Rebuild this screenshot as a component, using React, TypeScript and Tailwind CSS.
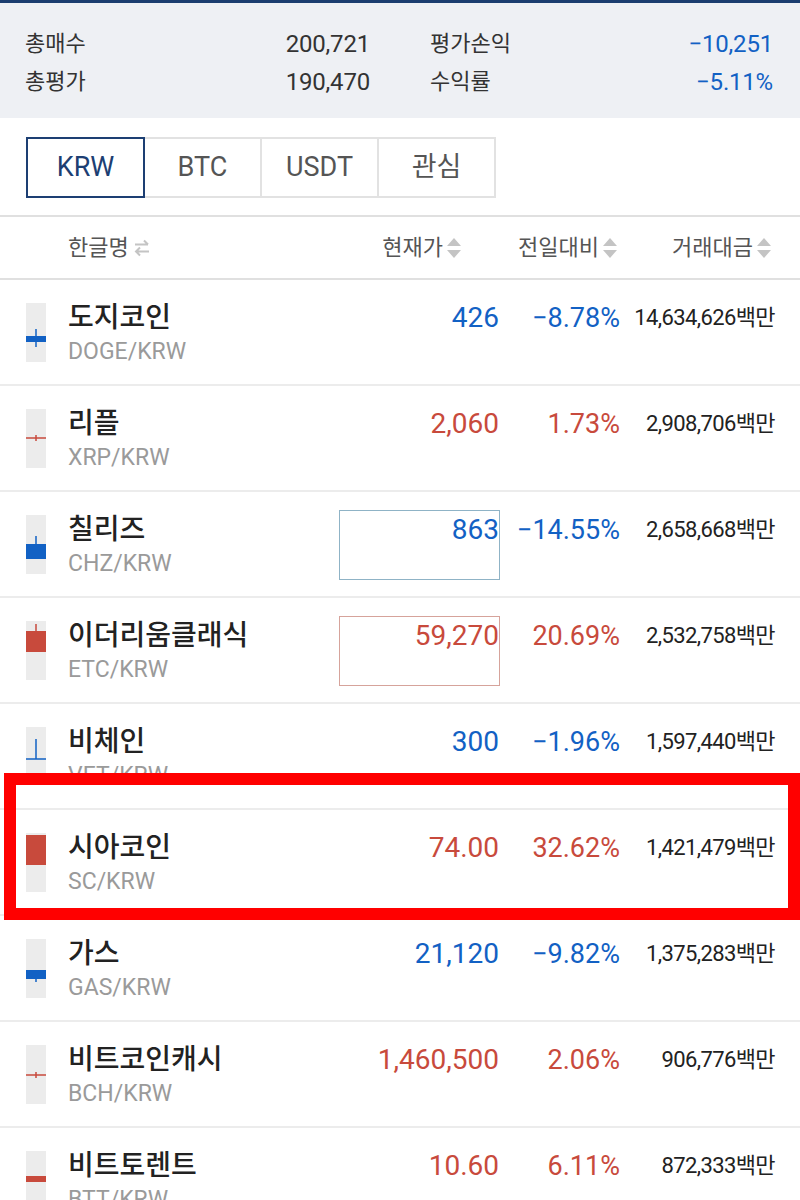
import React from 'react';

type Candle =
  | { kind: 'body'; top: number; bottom: number; wickTop?: number; wickBottom?: number }
  | { kind: 'line'; y: number; wickTop: number; wickBottom: number }
  | { kind: 'invT'; top: number; y: number };

interface Coin {
  name: string;
  symbol: string;
  price: string;
  change: string;
  volume: string;
  up: boolean;
  candle: Candle;
  box?: boolean;
}

const BLUE = '#1261c4';
const RED = '#c84a3c';

const coins: Coin[] = [
  { name: '도지코인', symbol: 'DOGE/KRW', price: '426', change: '−8.78%', volume: '14,634,626', up: false, candle: { kind: 'body', top: 33, bottom: 39, wickTop: 26, wickBottom: 44 } },
  { name: '리플', symbol: 'XRP/KRW', price: '2,060', change: '1.73%', volume: '2,908,706', up: true, candle: { kind: 'line', y: 29, wickTop: 26, wickBottom: 32 } },
  { name: '칠리즈', symbol: 'CHZ/KRW', price: '863', change: '−14.55%', volume: '2,658,668', up: false, box: true, candle: { kind: 'body', top: 29, bottom: 44, wickTop: 21 } },
  { name: '이더리움클래식', symbol: 'ETC/KRW', price: '59,270', change: '20.69%', volume: '2,532,758', up: true, box: true, candle: { kind: 'body', top: 10, bottom: 31, wickTop: 3 } },
  { name: '비체인', symbol: 'VET/KRW', price: '300', change: '−1.96%', volume: '1,597,440', up: false, candle: { kind: 'invT', top: 12, y: 32 } },
  { name: '시아코인', symbol: 'SC/KRW', price: '74.00', change: '32.62%', volume: '1,421,479', up: true, candle: { kind: 'body', top: 2, bottom: 32 } },
  { name: '가스', symbol: 'GAS/KRW', price: '21,120', change: '−9.82%', volume: '1,375,283', up: false, candle: { kind: 'body', top: 31, bottom: 40, wickBottom: 43 } },
  { name: '비트코인캐시', symbol: 'BCH/KRW', price: '1,460,500', change: '2.06%', volume: '906,776', up: true, candle: { kind: 'line', y: 30, wickTop: 27, wickBottom: 33 } },
  { name: '비트토렌트', symbol: 'BTT/KRW', price: '10.60', change: '6.11%', volume: '872,333', up: true, candle: { kind: 'body', top: 25, bottom: 31 } },
];

const CandleIcon: React.FC<{ candle: Candle; color: string }> = ({ candle, color }) => (
  <svg width="20" height="59" viewBox="0 0 20 59" className="shrink-0">
    <rect x="0" y="0" width="20" height="59" fill="#ececec" />
    {candle.kind === 'body' && (
      <>
        {candle.wickTop !== undefined && <rect x="9.25" y={candle.wickTop} width="1.5" height={candle.top - candle.wickTop} fill={color} />}
        {candle.wickBottom !== undefined && <rect x="9.25" y={candle.bottom} width="1.5" height={candle.wickBottom - candle.bottom} fill={color} />}
        <rect x="0" y={candle.top} width="20" height={candle.bottom - candle.top} fill={color} />
      </>
    )}
    {candle.kind === 'line' && (
      <>
        <rect x="9.25" y={candle.wickTop} width="1.5" height={candle.wickBottom - candle.wickTop} fill={color} />
        <rect x="0" y={candle.y - 0.75} width="20" height="1.5" fill={color} />
      </>
    )}
    {candle.kind === 'invT' && (
      <>
        <rect x="9.25" y={candle.top} width="1.5" height={candle.y - candle.top} fill={color} />
        <rect x="0" y={candle.y - 0.75} width="20" height="1.5" fill={color} />
      </>
    )}
  </svg>
);

const SortIcon = () => (
  <svg width="16" height="22" viewBox="0 0 16 22" className="ml-[3px] shrink-0">
    <path d="M8 1 L15 9 L1 9 Z" fill="#c4c4c4" />
    <path d="M8 21 L15 13 L1 13 Z" fill="#c4c4c4" />
  </svg>
);

const SwapIcon = () => (
  <svg width="18" height="20" viewBox="0 0 18 20" className="ml-[4px] shrink-0">
    <path d="M2 6.5 H15 M11 2.5 L15 6.5" stroke="#c4c4c4" strokeWidth="2" fill="none" />
    <path d="M16 13.5 H3 M7 9.5 L3 13.5 L7 17.5" stroke="#c4c4c4" strokeWidth="2" fill="none" />
  </svg>
);

const CoinRow: React.FC<{ coin: Coin }> = ({ coin }) => {
  const color = coin.up ? RED : BLUE;
  const boxBorder = coin.box ? (coin.up ? 'border-[#d6a39b]' : 'border-[#8fb3c6]') : 'border-transparent';
  return (
    <div className="flex h-[106px] items-start border-b-2 border-[#ececec] bg-white pt-[22px]">
      <div className="ml-[26px] mt-[1px]">
        <CandleIcon candle={coin.candle} color={color} />
      </div>
      <div className="ml-[22px] flex-1">
        <p className="text-[28px] leading-[32px] font-medium text-[#222]">{coin.name}</p>
        <p className="mt-[5px] text-[23px] leading-[26px] text-[#9a9a9a]">{coin.symbol}</p>
      </div>
      <div className={`-mt-[4px] h-[70px] w-[161px] border ${boxBorder} pt-[3px] text-right text-[28px] leading-[32px]`} style={{ color }}>
        {coin.price}
      </div>
      <div className="w-[120px] text-right text-[27px] leading-[32px]" style={{ color }}>
        {coin.change}
      </div>
      <div className="w-[155px] text-right text-[22px] leading-[32px] tracking-[-0.6px] text-[#222]">
        {coin.volume}백만
      </div>
      <div className="w-[25px]" />
    </div>
  );
};

export default function App() {
  const tabs = ['KRW', 'BTC', 'USDT', '관심'];

  return (
    <div className="relative min-h-[1200px] w-[800px] overflow-hidden bg-white" style={{ fontFamily: "Roboto, 'Noto Sans CJK KR', sans-serif" }}>
      <div className="h-[3px] bg-[#1b3d6f]" />

      {/* Summary */}
      <div className="bg-[#eef0f4] pb-[17px] pl-[25px] pt-[22px] text-[22px] leading-[38px] text-[#333]">
        <div className="grid grid-cols-[345px_343px] gap-x-[60px]">
          <div className="flex justify-between">
            <span>총매수</span>
            <span className="text-[24px] tracking-[-0.2px]">200,721</span>
          </div>
          <div className="flex justify-between">
            <span>평가손익</span>
            <span className="text-[24px] tracking-[-0.2px] text-[#1261c4]">−10,251</span>
          </div>
          <div className="flex justify-between">
            <span>총평가</span>
            <span className="text-[24px] tracking-[-0.2px]">190,470</span>
          </div>
          <div className="flex justify-between">
            <span>수익률</span>
            <span className="text-[24px] tracking-[-0.2px] text-[#1261c4]">−5.11%</span>
          </div>
        </div>
      </div>

      {/* Market tabs */}
      <div className="flex pb-[17px] pl-[26px] pt-[19px]">
        {tabs.map((t, i) =>
          i === 0 ? (
            <div key={t} className="z-10 flex h-[61px] w-[119px] items-center justify-center border-2 border-[#1d3f73] text-[27px] text-[#1d3f73]">
              {t}
            </div>
          ) : (
            <div key={t} className="-ml-[2px] flex h-[61px] w-[119px] items-center justify-center border-2 border-[#e2e2e2] text-[27px] text-[#555]">
              {t}
            </div>
          )
        )}
      </div>

      {/* Table header */}
      <div className="flex h-[65px] items-center border-y-2 border-[#e0e0e0] text-[22px] text-[#555]">
        <div className="ml-[68px] flex flex-1 items-center">
          한글명
          <SwapIcon />
        </div>
        <div className="flex w-[160px] items-center justify-end">
          현재가
          <SortIcon />
        </div>
        <div className="flex w-[156px] items-center justify-end">
          전일대비
          <SortIcon />
        </div>
        <div className="mr-[28px] flex w-[154px] items-center justify-end">
          거래대금
          <SortIcon />
        </div>
      </div>

      {/* Coin list */}
      <div>
        {coins.map((c) => (
          <CoinRow key={c.symbol} coin={c} />
        ))}
      </div>

      {/* Red annotation box over the 시아코인 row */}
      <div className="absolute left-[4px] top-[773px] h-[147px] w-[796px] border-[12px] border-[#ff0000]">
        <div className="h-[23px] bg-white" />
      </div>
    </div>
  );
}
